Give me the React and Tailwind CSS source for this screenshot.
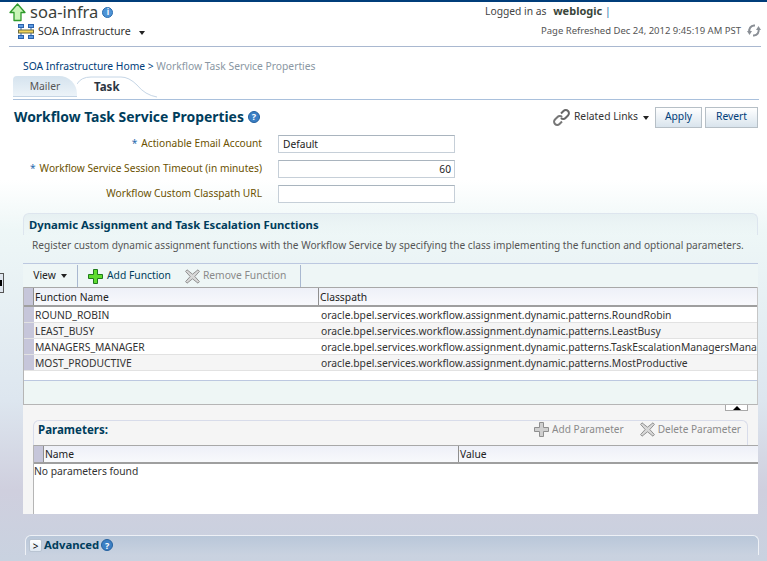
const font = { fontFamily: '"Noto Sans", sans-serif' };

function UpArrow() {
  return (
    <svg width="17" height="19" viewBox="0 0 17 19" className="shrink-0">
      <path d="M8.5 1 L16 9.5 H12 V17.5 H5 V9.5 H1 Z" fill="#c9f5b8" stroke="#2f9a2c" strokeWidth="1.3" strokeLinejoin="round" />
    </svg>
  );
}

function RoundIcon({ letter, size = 12, dark }) {
  return (
    <span
      className={`inline-flex items-center justify-center rounded-full shrink-0 text-white font-bold border ${dark ? 'bg-[#3b7fc4] border-[#24619f]' : 'bg-[#4d93d6] border-[#2a6cae]'}`}
      style={{ width: size, height: size, fontSize: size - 3, lineHeight: 1 }}
    >
      {letter}
    </span>
  );
}

function TargetIcon() {
  return (
    <svg width="16" height="15" viewBox="0 0 16 15" className="shrink-0">
      <rect x="0.5" y="0.5" width="5" height="3" fill="#5f9be0" stroke="#2a62ad" />
      <rect x="10.5" y="0.5" width="5" height="3" fill="#5f9be0" stroke="#2a62ad" />
      <rect x="0.5" y="11.5" width="5" height="3" fill="#5f9be0" stroke="#2a62ad" />
      <rect x="10.5" y="11.5" width="5" height="3" fill="#5f9be0" stroke="#2a62ad" />
      <path d="M3 4 V11 M13 4 V11" stroke="#2a62ad" />
      <rect x="0.5" y="6" width="15" height="3" fill="#f2d65c" stroke="#6d6a3a" />
    </svg>
  );
}

function Caret() {
  return <span className="inline-block w-0 h-0 border-l-[3.5px] border-r-[3.5px] border-t-[4px] border-l-transparent border-r-transparent border-t-[#222]" />;
}

function PlusIcon({ disabled }) {
  return (
    <svg width="15" height="15" viewBox="0 0 15 15" className="shrink-0">
      <path
        d="M5.5 0.5 H9.5 V5.5 H14.5 V9.5 H9.5 V14.5 H5.5 V9.5 H0.5 V5.5 H5.5 Z"
        fill={disabled ? '#cfcfcf' : '#5fdc2f'}
        stroke={disabled ? '#8f8f8f' : '#1f7a1c'}
      />
    </svg>
  );
}

function CrossIcon() {
  return (
    <svg width="15" height="15" viewBox="0 0 15 15" className="shrink-0">
      <path d="M2 0.8 L7.5 5.2 L13 0.8 L14.4 2.4 L9.8 7.5 L14.4 12.6 L13 14.2 L7.5 9.8 L2 14.2 L0.6 12.6 L5.2 7.5 L0.6 2.4 Z" fill="#d8d8d8" stroke="#929292" />
    </svg>
  );
}

function ChainIcon() {
  return (
    <svg width="17" height="17" viewBox="0 0 17 17" className="shrink-0" fill="none">
      <path d="M8 4.5 L10.5 2 A3 3 0 0 1 15 6.5 L12.5 9 A3 3 0 0 1 8 9" stroke="#666" strokeWidth="2" />
      <path d="M9 8 A3 3 0 0 0 4.5 8 L2 10.5 A3 3 0 0 0 6.5 15 L9 12.5" stroke="#777" strokeWidth="2" />
    </svg>
  );
}

function RefreshIcon() {
  return (
    <svg width="14" height="13" viewBox="0 0 14 13" className="shrink-0" fill="none">
      <path d="M2.5 8 A5 5 0 0 1 7 1.5 H8" stroke="#8a8f96" strokeWidth="2" />
      <path d="M0 7 H5 L2.5 11 Z" fill="#8a8f96" />
      <path d="M11.5 5 A5 5 0 0 1 7 11.5 H6" stroke="#8a8f96" strokeWidth="2" />
      <path d="M9 6 H14 L11.5 2 Z" fill="#8a8f96" />
    </svg>
  );
}

function FormRow({ label, required, value, right }) {
  return (
    <div className="flex items-center h-[18px]">
      <div className="w-[262px] text-right text-[#6b5200] whitespace-nowrap">
        {required && <span className="text-[#2a6cae] mr-1">*</span>}
        {label}
      </div>
      <div className={`ml-4 w-[177px] h-[18px] bg-white border border-[#c6cfd8] border-t-[#a9b4be] text-[#222] px-1 leading-[17px] ${right ? 'text-right pr-[3px]' : ''}`}>
        {value}
      </div>
    </div>
  );
}

const rows = [
  ['ROUND_ROBIN', 'oracle.bpel.services.workflow.assignment.dynamic.patterns.RoundRobin'],
  ['LEAST_BUSY', 'oracle.bpel.services.workflow.assignment.dynamic.patterns.LeastBusy'],
  ['MANAGERS_MANAGER', 'oracle.bpel.services.workflow.assignment.dynamic.patterns.TaskEscalationManagersManager'],
  ['MOST_PRODUCTIVE', 'oracle.bpel.services.workflow.assignment.dynamic.patterns.MostProductive'],
];

export default function App() {
  return (
    <div
      style={font}
      className="relative w-[767px] h-[561px] overflow-hidden text-[10.3px] text-[#333] bg-[linear-gradient(to_bottom,#ffffff_0px,#ffffff_180px,#eef7f7_230px,#dde6ef_400px,#cfcfde_490px,#c9d2e0_561px)]"
    >
      {/* bandeau du haut */}
      <div className="h-[2px] bg-[#003d7a]" />
      <div className="flex justify-between h-[44px] ml-[9px] mr-[6px] border-b border-[#a9b8d0] box-content">
        <div>
          <div className="flex items-center gap-1 h-[20px]">
            <UpArrow />
            <span className="text-[16.5px] leading-none text-[#3a3f3a]">soa-infra</span>
            <RoundIcon letter="i" size={11} />
          </div>
          <div className="flex items-center gap-1 ml-[9px] mt-[2px]">
            <TargetIcon />
            <span className="text-[10.6px] text-[#333]">SOA Infrastructure</span>
            <span className="ml-1"><Caret /></span>
          </div>
        </div>
        <div className="flex flex-col items-end">
          <div className="w-[276px] mt-[1px] text-[#444] whitespace-nowrap">
            Logged in as <b className="ml-1 text-[11px] text-[#3a463a]">weblogic</b> <span className="text-[#2a6cae]">|</span>
          </div>
          <div className="flex items-center gap-[6px] mt-[4px] text-[9.5px] text-[#555] whitespace-nowrap">
            Page Refreshed Dec 24, 2012 9:45:19 AM PST
            <RefreshIcon />
          </div>
        </div>
      </div>

      {/* fil d'ariane et onglets */}
      <div className="ml-[23px] mt-[11px] h-[16px] leading-[16px] whitespace-nowrap">
        <span className="text-[#003d7a]">SOA Infrastructure Home</span>
        <span className="text-[#003d7a]"> &gt; </span>
        <span className="text-[#8a97a3]">Workflow Task Service Properties</span>
      </div>
      <div className="flex items-end ml-[13px] mr-[8px] h-[25px] border-b-[1px] border-[#a9c0dc] box-content">
        <div className="w-[64px] h-[21px] mb-[2px] pt-[1px] flex items-center justify-center rounded-tr-[18px] rounded-tl-[4px] bg-gradient-to-b from-[#d5e3ee] to-[#ecf3f8] border-b border-[#c4d4e4] text-[#555]">
          Mailer
        </div>
        <div className="relative w-[81px] h-[21px] mb-[2px] flex items-center pl-[17px] text-[11.5px] font-bold text-[#2c3542]">
          <svg width="81" height="22" viewBox="0 0 81 22" className="absolute left-0 top-0" fill="none">
            <path d="M0 8 Q4 1 14 1 H44 Q52 1 60 9 Q68 19 80 21" stroke="#c6d6e6" />
          </svg>
          <span className="relative">Task</span>
        </div>
      </div>

      {/* titre et actions */}
      <div className="flex justify-between items-center ml-[14px] mr-[9px] mt-[5px] h-[24px]">
        <div className="flex items-center gap-1">
          <span className="text-[13.9px] font-bold text-[#003d5c] whitespace-nowrap">Workflow Task Service Properties</span>
          <RoundIcon letter="?" size={12} dark />
        </div>
        <div className="flex items-center">
          <ChainIcon />
          <span className="ml-[4px] text-[#333] whitespace-nowrap">Related Links</span>
          <span className="ml-[5px] mr-[6px]"><Caret /></span>
          <button className="w-[47px] h-[21px] border border-[#b6bfc6] bg-gradient-to-b from-white to-[#d9e4ed] text-[#003d7a]">Apply</button>
          <button className="ml-[3px] w-[53px] h-[21px] border border-[#b6bfc6] bg-gradient-to-b from-white to-[#d9e4ed] text-[#003d7a]">Revert</button>
        </div>
      </div>

      {/* formulaire */}
      <div className="flex flex-col gap-[7px] mt-[6px] text-[10.2px]">
        <FormRow required label="Actionable Email Account" value="Default" />
        <FormRow required label="Workflow Service Session Timeout (in minutes)" value="60" right />
        <FormRow label="Workflow Custom Classpath URL" value="" />
      </div>

      {/* panneau fonctions */}
      <div className="ml-[23px] w-[735px] mt-[10px]">
        <div className="h-[22px] leading-[22px] pl-[5px] font-bold text-[11.3px] text-[#003d5c] rounded-tl-[6px] rounded-tr-[6px] border-t border-l border-r border-[#dde5ee] bg-gradient-to-b from-[#e6f0f2] to-transparent whitespace-nowrap">
          Dynamic Assignment and Task Escalation Functions
        </div>
        <div className="h-[28px] pl-[9px] pt-[3px] text-[10.13px] text-[#555] whitespace-nowrap">
          Register custom dynamic assignment functions with the Workflow Service by specifying the class implementing the function and optional parameters.
        </div>
        <div className="flex items-center h-[24px] pt-[1px] border-t border-[#bcc8e0] bg-[#eef6f6] whitespace-nowrap">
          <div className="w-[55px] h-full flex items-center justify-center gap-[5px] border-r border-[#a9b8d0] text-[#222]">
            View <Caret />
          </div>
          <div className="w-[223px] h-full flex items-center pl-[10px] border-r border-[#a9b8d0]">
            <PlusIcon />
            <span className="ml-[4px] text-[#003d5c]">Add Function</span>
            <span className="ml-[14px]"><CrossIcon /></span>
            <span className="ml-[3px] text-[#8a8a8a]">Remove Function</span>
          </div>
        </div>
        <div className="border border-t-0 border-[#b5b5b5] border-r-[#c6c6c6] bg-white">
          <div className="flex h-[17px] border-t border-b-[2px] border-t-[#a8a8a8] border-b-[#9f9f9f] bg-gradient-to-b from-[#eef0f8] to-[#f8f9fc] box-content">
            <div className="w-[10px] bg-[#c6c6da] border-r border-[#8f8f8f]" />
            <div className="w-[285px] pl-[1px] border-r border-[#8f8f8f] leading-[19px] text-[#222]">Function Name</div>
            <div className="pl-[1px] leading-[19px] text-[#222]">Classpath</div>
          </div>
          {rows.map((r, i) => (
            <div key={r[0]} className={`flex h-[16px] border-b border-[#e2e2e2] ${i % 2 ? 'bg-[#f5f5f5]' : 'bg-white'}`}>
              <div className="w-[10px] bg-[#c6c6da]" />
              <div className="w-[285px] pl-[1px] leading-[16px] text-[#333] whitespace-nowrap">{r[0]}</div>
              <div className="flex-1 min-w-0 overflow-hidden pl-[2px] leading-[16px] text-[#333] whitespace-nowrap">{r[1]}</div>
            </div>
          ))}
          <div className="h-[10px] border-b border-[#bcc8e0]" />
          <div className="h-[23px] bg-[#eef6f5]" />
        </div>
        <div className="relative bg-[#f5f5f5] h-[109px] pt-[15px] px-[10px]">
          <div className="absolute right-[10px] top-0 w-[23px] h-[6px] bg-white border-b border-l border-r border-[#a9a9a9] flex items-center justify-center">
            <span className="inline-block w-0 h-0 border-l-[4px] border-r-[4px] border-b-[4px] border-l-transparent border-r-transparent border-b-black" />
          </div>
          <div className="flex justify-between items-center h-[25px] pb-[6px] rounded-t-[6px] border-t border-l border-r border-[#d8dcea] pl-[4px] pr-[6px]">
            <span className="font-bold text-[11.5px] text-[#003d5c]">Parameters:</span>
            <div className="flex items-center text-[#8a8a8a] text-[10.1px]">
              <PlusIcon disabled />
              <span className="ml-[3px]">Add Parameter</span>
              <span className="ml-[16px]"><CrossIcon /></span>
              <span className="ml-[3px]">Delete Parameter</span>
            </div>
          </div>
          <div className="border-l border-[#b5b5b5] bg-white h-[69px] -mr-[10px]">
            <div className="flex h-[16px] border-t border-b-[2px] border-t-[#a8a8a8] border-b-[#9f9f9f] bg-gradient-to-b from-[#eef0f8] to-[#f8f9fc] box-content">
              <div className="w-[10px] bg-[#c6c6da] border-r border-[#8f8f8f]" />
              <div className="w-[415px] pl-[1px] border-r border-[#8f8f8f] leading-[17px] text-[#222]">Name</div>
              <div className="pl-[1px] leading-[17px] text-[#222]">Value</div>
            </div>
            <div className="leading-[14px] text-[#333]">No parameters found</div>
          </div>
        </div>
        <div className="mt-[21px] flex items-center h-[20px] ml-[2px] -mr-[1px] rounded-t-[6px] border-t border-l border-r border-[#eef1f6] bg-gradient-to-b from-[#b9c7d9] to-[#c9d2e0]">
          <span className="ml-[3px] w-[13px] h-[13px] flex items-center justify-center bg-gradient-to-b from-white to-[#dfe8f2] border border-[#b9c4d2] rounded-[2px] text-[10px] leading-none text-black">&gt;</span>
          <span className="ml-[2px] font-bold text-[11.3px] text-[#003d5c]">Advanced</span>
          <span className="ml-[2px]"><RoundIcon letter="?" size={12} dark /></span>
        </div>
      </div>

      {/* poignée de repli à gauche */}
      <div className="absolute left-0 top-[273px] w-[4px] h-[20px] bg-[#dfe6ee] border-t border-r border-b border-[#555] flex items-center">
        <span className="w-[2px] h-[6px] bg-black" />
      </div>
    </div>
  );
}
